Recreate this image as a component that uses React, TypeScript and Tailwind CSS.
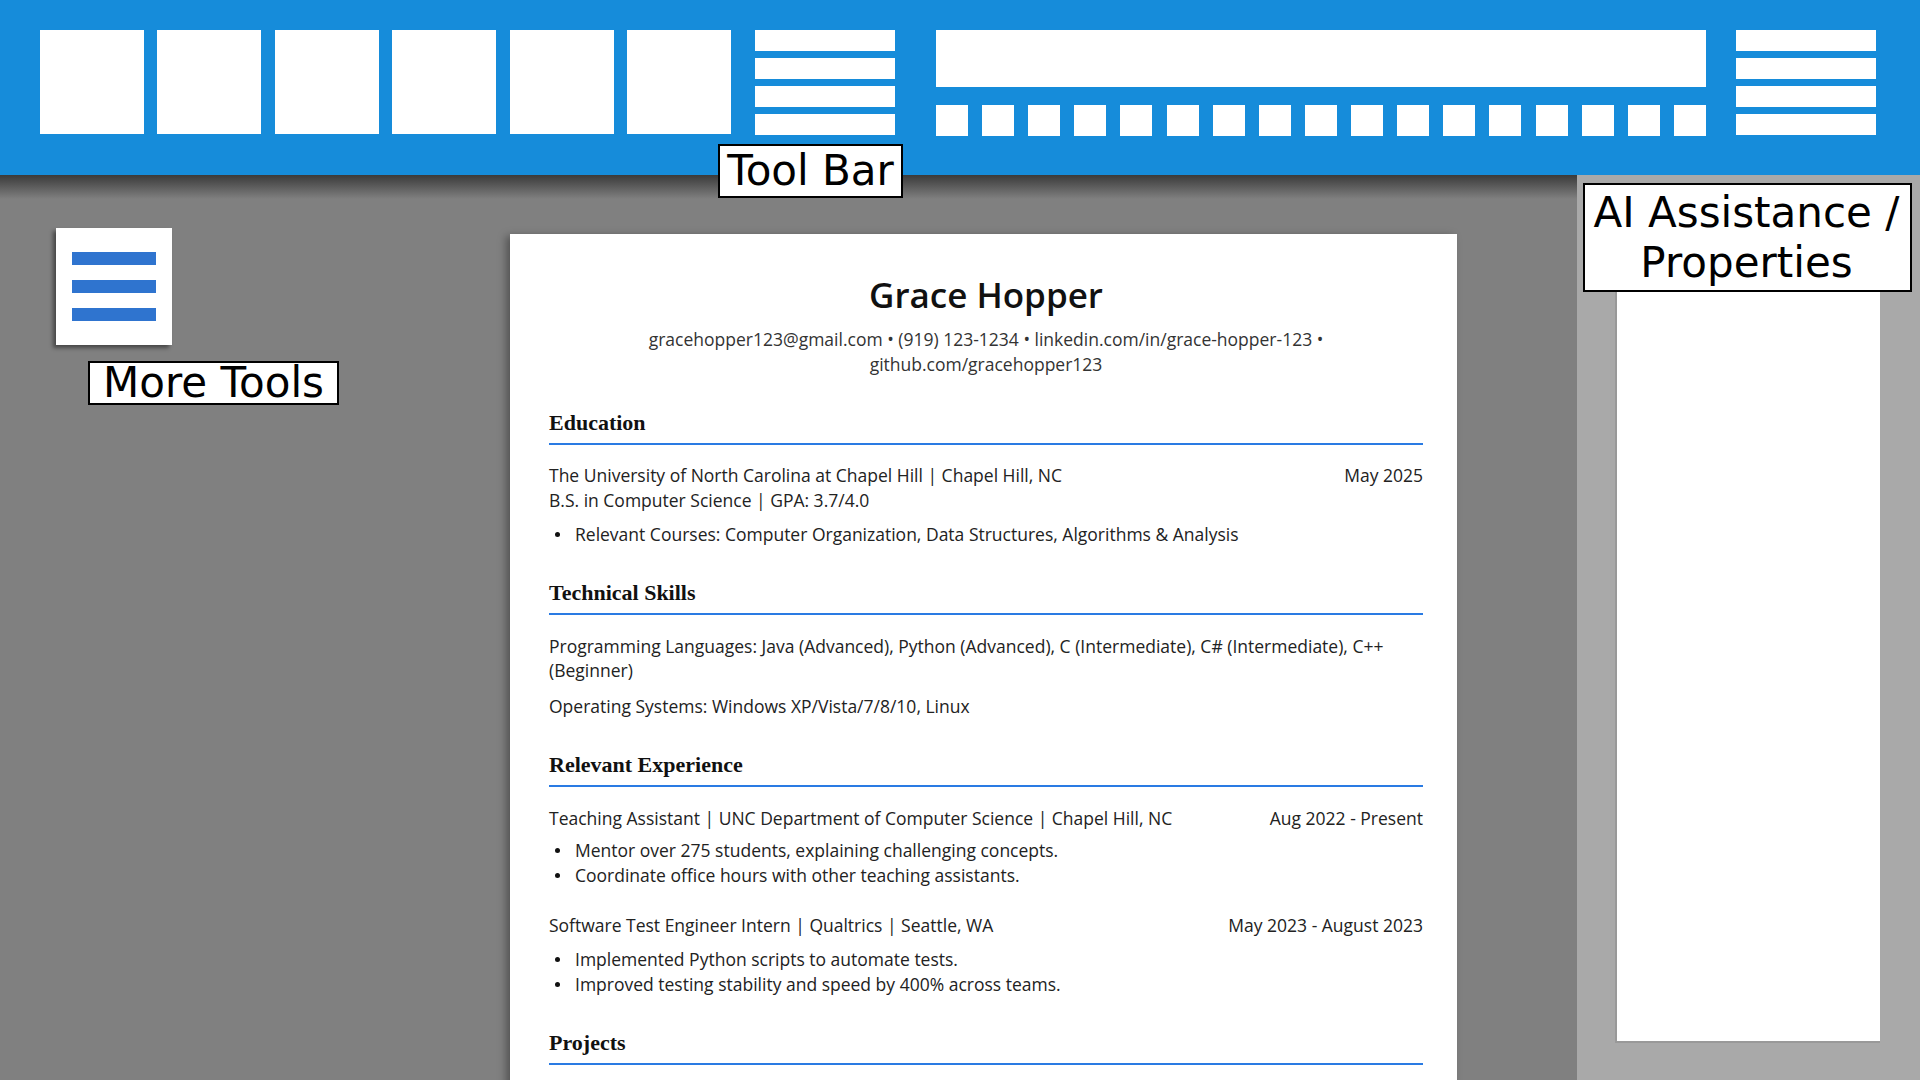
import React from 'react';

const squares = [0, 1, 2, 3, 4, 5];
const keys = Array.from({ length: 17 }, (_, i) => i);

function LineStack() {
  return (
    <div className="flex w-[140px] flex-col gap-[7px]">
      {[0, 1, 2, 3].map((i) => (
        <div key={i} className="h-[21px] bg-white" />
      ))}
    </div>
  );
}

function Heading({ children }: { children: React.ReactNode }) {
  return (
    <div className="mt-[30px] border-b-2 border-[#2a7be3] pb-[6px] pt-[2px] font-['Liberation_Serif',serif] text-[22px] font-bold leading-[28px] text-[#111]">
      {children}
    </div>
  );
}

function Bullet({ children }: { children: React.ReactNode }) {
  return (
    <div className="flex items-center leading-[25px]">
      <span className="ml-[6px] mr-[15px] h-[5px] w-[5px] shrink-0 rounded-full bg-[#111]" />
      <span>{children}</span>
    </div>
  );
}

function Row({ left, right }: { left: string; right: string }) {
  return (
    <div className="flex justify-between leading-[25px]">
      <span>{left}</span>
      <span>{right}</span>
    </div>
  );
}

function Resume() {
  return (
    <div className="mt-[59px] h-[900px] w-[947px] shrink-0 bg-white pl-[39px] pr-[34px] pt-[39px] font-['Open_Sans',sans-serif] text-[17.5px] text-[#222] shadow-[-4px_2px_8px_rgba(0,0,0,0.35)]">
      <div className="text-center text-[35px] font-semibold leading-[44px] text-[#111]">Grace Hopper</div>
      <div className="mt-[10px] text-center leading-[25px] text-[#333]">
        gracehopper123@gmail.com • (919) 123-1234 • linkedin.com/in/grace-hopper-123 •
        <br />
        github.com/gracehopper123
      </div>

      <Heading>Education</Heading>
      <div className="mt-[18px]">
        <Row left="The University of North Carolina at Chapel Hill | Chapel Hill, NC" right="May 2025" />
        <div className="leading-[25px]">B.S. in Computer Science | GPA: 3.7/4.0</div>
      </div>
      <div className="mt-[9px]">
        <Bullet>Relevant Courses: Computer Organization, Data Structures, Algorithms &amp; Analysis</Bullet>
      </div>

      <Heading>Technical Skills</Heading>
      <div className="mt-[19px] leading-[24px]">
        Programming Languages: Java (Advanced), Python (Advanced), C (Intermediate), C# (Intermediate), C++
        <br />
        (Beginner)
      </div>
      <div className="mt-[12px] leading-[25px]">Operating Systems: Windows XP/Vista/7/8/10, Linux</div>

      <Heading>Relevant Experience</Heading>
      <div className="mt-[19px]">
        <Row left="Teaching Assistant | UNC Department of Computer Science | Chapel Hill, NC" right="Aug 2022 - Present" />
      </div>
      <div className="mt-[7px]">
        <Bullet>Mentor over 275 students, explaining challenging concepts.</Bullet>
        <Bullet>Coordinate office hours with other teaching assistants.</Bullet>
      </div>
      <div className="mt-[25px]">
        <Row left="Software Test Engineer Intern | Qualtrics | Seattle, WA" right="May 2023 - August 2023" />
      </div>
      <div className="mt-[9px]">
        <Bullet>Implemented Python scripts to automate tests.</Bullet>
        <Bullet>Improved testing stability and speed by 400% across teams.</Bullet>
      </div>

      <Heading>Projects</Heading>
    </div>
  );
}

export default function App() {
  return (
    <div className="relative flex h-[1080px] w-[1920px] flex-col overflow-hidden bg-[#808080] font-['DejaVu_Sans',sans-serif]">
      {/* tool bar */}
      <header className="flex h-[175px] shrink-0 items-start bg-[#168cda] pl-[40px] pt-[30px]">
        <div className="flex gap-[13.4px]">
          {squares.map((i) => (
            <div key={i} className="h-[104px] w-[104px] bg-white" />
          ))}
        </div>
        <div className="ml-[24px]">
          <LineStack />
        </div>
        <div className="ml-[41px] flex w-[770px] flex-col">
          <div className="h-[57px] bg-white" />
          <div className="mt-[18px] flex h-[31px] justify-between">
            {keys.map((i) => (
              <div key={i} className="w-[32px] bg-white" />
            ))}
          </div>
        </div>
        <div className="ml-[30px]">
          <LineStack />
        </div>
      </header>

      <div className="flex min-h-0 flex-1">
        <main className="relative flex flex-1 overflow-hidden">
          <div className="pointer-events-none absolute left-0 right-0 top-0 h-[24px] bg-linear-to-b from-[#3a3a3a] to-transparent" />
          <div className="flex w-[510px] shrink-0 flex-col pl-[56px] pt-[53px]">
            <button
              type="button"
              className="flex h-[117px] w-[116px] flex-col items-center justify-center gap-[15px] bg-white shadow-[-3px_3px_4px_rgba(0,0,0,0.45)]"
            >
              <span className="h-[13px] w-[84px] bg-[#2f74cf]" />
              <span className="h-[13px] w-[84px] bg-[#2f74cf]" />
              <span className="h-[13px] w-[84px] bg-[#2f74cf]" />
            </button>
            <div className="ml-[32px] mt-[16px] flex h-[44px] w-[251px] items-center justify-center border-2 border-black bg-white text-[42px] leading-none text-black">
              More Tools
            </div>
          </div>
          <Resume />
        </main>

        <aside className="w-[343px] shrink-0 bg-[#a9a9a9] pl-[38px] pt-[20px]">
          <div className="h-[848px] w-[265px] border-b-2 border-l-2 border-[#999] bg-white" />
        </aside>
      </div>

      {/* annotation labels */}
      <div className="absolute left-[718px] top-[144px] flex h-[54px] w-[185px] items-center justify-center border-2 border-black bg-white text-[42px] leading-none text-black">
        Tool Bar
      </div>
      <div className="absolute left-[1583px] top-[183px] flex h-[109px] w-[329px] flex-col items-center justify-center border-2 border-black bg-white pr-[2px] text-center text-[42px] leading-[50px] text-black">
        <span>AI Assistance /</span>
        <span>Properties</span>
      </div>
    </div>
  );
}
